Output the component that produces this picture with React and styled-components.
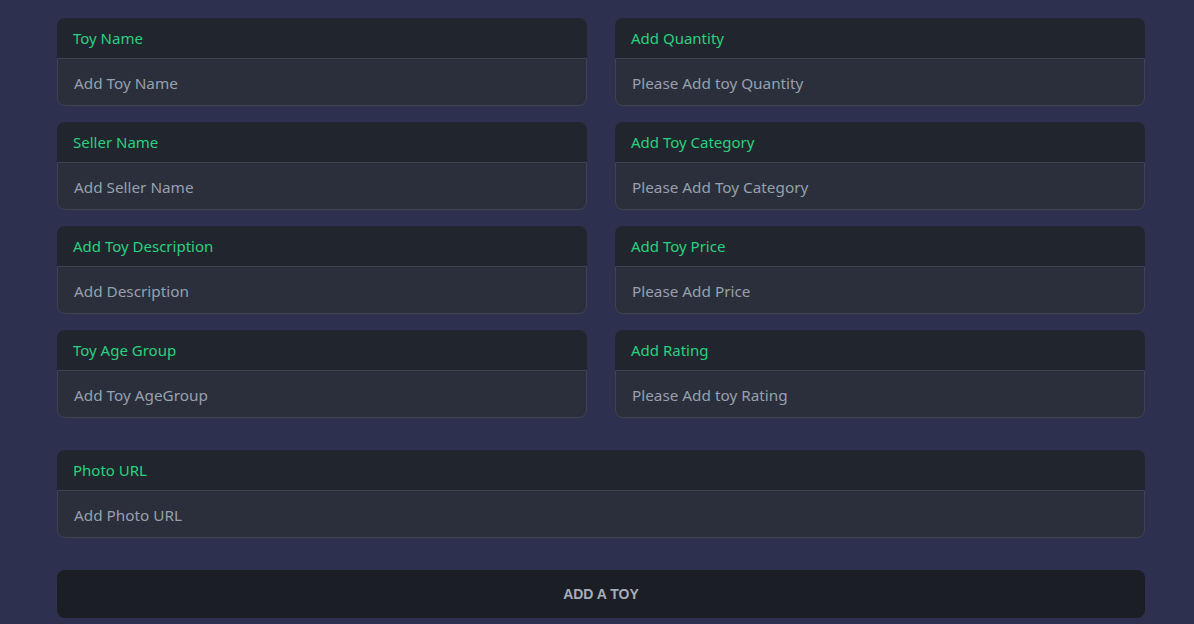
import React from 'react'
import styled, { createGlobalStyle } from 'styled-components'

const GlobalStyle = createGlobalStyle`
  html, body {
    margin: 0;
    padding: 0;
    background: #2e3050;
    font-family: "Noto Sans", "Open Sans", sans-serif;
  }
  * { box-sizing: border-box; }
`

const Page = styled.div`
  width: 1088px;
  margin-left: 57px;
  padding-top: 18px;
`

const Grid = styled.div`
  display: grid;
  grid-template-columns: 530px 530px;
  column-gap: 28px;
  row-gap: 16px;
`

const Group = styled.label`
  display: flex;
  flex-direction: column;
  margin-top: ${p => p.$top || 0}px;
`

const Caption = styled.span`
  height: 40px;
  display: flex;
  align-items: center;
  padding: 0 16px;
  background: #21252e;
  color: #2bd17e;
  font-size: 15px;
  border-radius: 8px 8px 0 0;
`

const Field = styled.input`
  height: 48px;
  padding: 2px 16px 0;
  background: #2a2f3b;
  border: 1px solid #3d4351;
  border-radius: 0 0 8px 8px;
  color: #a6adbb;
  font-family: inherit;
  font-size: 15.3px;
  outline: none;
  &::placeholder { color: #98a0ae; }
`

const Submit = styled.button`
  width: 100%;
  height: 48px;
  margin-top: 32px;
  border: none;
  border-radius: 8px;
  background: #1b1e25;
  color: #a6adbb;
  font-family: "Liberation Sans", Arial, sans-serif;
  font-weight: 700;
  font-size: 14px;
  text-transform: uppercase;
`

const fields = [
  ['Toy Name', 'Add Toy Name'],
  ['Add Quantity', 'Please Add toy Quantity'],
  ['Seller Name', 'Add Seller Name'],
  ['Add Toy Category', 'Please Add Toy Category'],
  ['Add Toy Description', 'Add Description'],
  ['Add Toy Price', 'Please Add Price'],
  ['Toy Age Group', 'Add Toy AgeGroup'],
  ['Add Rating', 'Please Add toy Rating'],
]

export default function App() {
  return (
    <>
      <GlobalStyle />
      <Page>
        <Grid>
          {fields.map(([label, ph]) => (
            <Group key={label}>
              <Caption>{label}</Caption>
              <Field placeholder={ph} />
            </Group>
          ))}
        </Grid>
        <Group $top={32}>
          <Caption>Photo URL</Caption>
          <Field placeholder="Add Photo URL" />
        </Group>
        <Submit>Add a Toy</Submit>
      </Page>
    </>
  )
}
